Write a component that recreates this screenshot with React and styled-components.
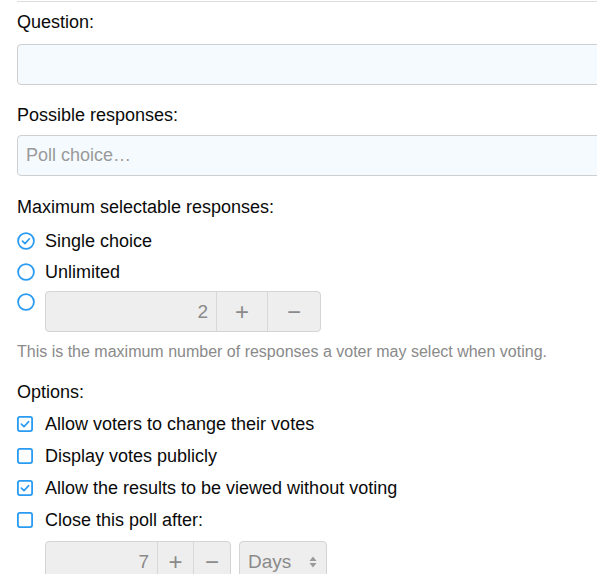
import React from 'react'
import styled, { createGlobalStyle } from 'styled-components'

const Global = createGlobalStyle`
  html, body {
    margin: 0;
    padding: 0;
    background: #fff;
    overflow: hidden;
  }
  body {
    font-family: "Liberation Sans", Arial, sans-serif;
    font-size: 18px;
    color: #0a0a0a;
  }
`

const BLUE = '#2a9bf2'

const Form = styled.div`
  margin: 1px 0 0 17px;
  width: 640px;
  border-top: 1px solid #dedede;
  padding-top: 9px;
`

const Label = styled.div`
  line-height: 22px;
  margin-top: ${p => p.$top || 0}px;
  margin-bottom: ${p => p.$bottom ?? 11}px;
`

const TextInput = styled.input`
  display: block;
  box-sizing: border-box;
  width: 100%;
  height: 41px;
  padding: 0 8px;
  border: 1px solid #cfcfcf;
  border-radius: 4px;
  background: #f5fafe;
  font: inherit;
  color: #111;
  outline: none;
  &::placeholder {
    color: #9a9a9a;
  }
`

const ChoiceRow = styled.label`
  display: flex;
  align-items: ${p => (p.$top ? 'flex-start' : 'center')};
  gap: ${p => p.$gap || 12}px;
  min-height: ${p => p.$h || 31}px;
  padding-top: ${p => (p.$top ? 4 : 0)}px;
  line-height: 22px;
`

const Mark = styled.span`
  flex: none;
  display: flex;
  margin-top: ${p => p.$mt || 0}px;
`

const Help = styled.div`
  color: #8a8a8a;
  font-size: 16px;
  line-height: 22px;
  margin-top: 9px;
`

const Spinner = styled.div`
  display: flex;
  width: ${p => p.$w}px;
  height: 41px;
  box-sizing: border-box;
  border: 1px solid #d4d4d4;
  border-radius: 4px;
  background: #eee;
  color: #8a8a8a;
  font-size: 19px;
`

const Value = styled.div`
  flex: 1;
  display: flex;
  align-items: center;
  justify-content: flex-end;
  padding-right: 8px;
`

const StepButton = styled.div`
  flex: none;
  width: ${p => p.$w}px;
  display: flex;
  align-items: center;
  justify-content: center;
  border-left: 1px solid #d8d8d8;
  font-size: 24px;
  color: #8a8a8a;
`

const Indent = styled.div`
  display: flex;
  gap: 8px;
  margin-left: 28px;
  margin-top: 5px;
`

const Select = styled.div`
  width: 88px;
  height: 41px;
  box-sizing: border-box;
  border: 1px solid #d4d4d4;
  border-radius: 4px;
  background: #eee;
  color: #8a8a8a;
  font-size: 19px;
  display: flex;
  align-items: center;
  justify-content: space-between;
  padding: 0 9px 0 8px;
`

const Radio = ({ checked }) => (
  <svg width="18" height="18" viewBox="0 0 18 18">
    <circle cx="9" cy="9" r="7.9" fill="none" stroke={BLUE} strokeWidth="1.8" />
    {checked && (
      <path d="M5.5 9.2 L8 11.6 L12.4 6.8" fill="none" stroke={BLUE} strokeWidth="1.7" strokeLinecap="round" strokeLinejoin="round" />
    )}
  </svg>
)

const Check = ({ checked }) => (
  <svg width="16" height="16" viewBox="0 0 16 16">
    <rect x="0.9" y="0.9" width="14.2" height="14.2" rx="2" fill="none" stroke={BLUE} strokeWidth="1.8" />
    {checked && (
      <path d="M4.4 8.2 L7 10.7 L11.6 5.6" fill="none" stroke={BLUE} strokeWidth="1.7" strokeLinecap="round" strokeLinejoin="round" />
    )}
  </svg>
)

const Arrows = () => (
  <svg width="8" height="12" viewBox="0 0 8 12">
    <path d="M4 0.5 L7.5 5 H0.5 Z" fill="#9a9a9a" />
    <path d="M4 11.5 L7.5 7 H0.5 Z" fill="#9a9a9a" />
  </svg>
)

export default function App() {
  return (
    <>
      <Global />
      <Form>
        <Label>Question:</Label>
        <TextInput />

        <Label $top={19} $bottom={9}>Possible responses:</Label>
        <TextInput placeholder="Poll choice…" />

        <Label $top={20} $bottom={7}>Maximum selectable responses:</Label>
        <ChoiceRow $gap={10}>
          <Mark><Radio checked /></Mark>
          Single choice
        </ChoiceRow>
        <ChoiceRow $gap={10}>
          <Mark><Radio /></Mark>
          Unlimited
        </ChoiceRow>
        <ChoiceRow $top $gap={10}>
          <Mark $mt={2}><Radio /></Mark>
          <Spinner $w={276}>
            <Value>2</Value>
            <StepButton $w={50}>+</StepButton>
            <StepButton $w={52}>−</StepButton>
          </Spinner>
        </ChoiceRow>
        <Help>This is the maximum number of responses a voter may select when voting.</Help>

        <Label $top={18} $bottom={5}>Options:</Label>
        <ChoiceRow $h={32}>
          <Mark><Check checked /></Mark>
          Allow voters to change their votes
        </ChoiceRow>
        <ChoiceRow $h={32}>
          <Mark><Check /></Mark>
          Display votes publicly
        </ChoiceRow>
        <ChoiceRow $h={32}>
          <Mark><Check checked /></Mark>
          Allow the results to be viewed without voting
        </ChoiceRow>
        <ChoiceRow $h={32}>
          <Mark><Check /></Mark>
          Close this poll after:
        </ChoiceRow>
        <Indent>
          <Spinner $w={186}>
            <Value>7</Value>
            <StepButton $w={35}>+</StepButton>
            <StepButton $w={36}>−</StepButton>
          </Spinner>
          <Select>
            Days
            <Arrows />
          </Select>
        </Indent>
      </Form>
    </>
  )
}
